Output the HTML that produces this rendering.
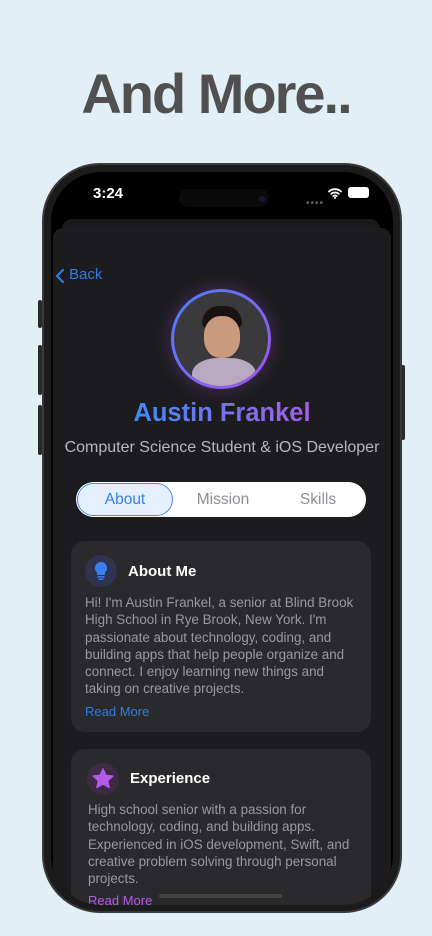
<!DOCTYPE html>
<html><head><meta charset="utf-8"><style>
*{margin:0;padding:0;box-sizing:border-box}
body{width:432px;height:936px;background:#e2eff6;position:relative;overflow:hidden;font-family:"Liberation Sans",sans-serif}
.title{position:absolute;top:61px;left:0;width:432px;text-align:center;font-size:56px;font-weight:bold;color:#505050;letter-spacing:-2px}
.btn{position:absolute;background:#2a2a2a;border-radius:2px}
.phone{position:absolute;left:42px;top:163px;width:360px;height:750px;border-radius:58px;background:#1b1b1b;border:2px solid #3a3a3a}
.screen{position:absolute;left:51px;top:172px;width:342px;height:733px;border-radius:50px;background:#000;overflow:hidden}
.sheet2{position:absolute;left:11px;top:47px;width:318px;height:40px;border-radius:10px;background:#1a1a1c}
.sheet{position:absolute;left:2px;top:56px;width:338px;height:700px;border-radius:10px;background:#1c1c1e}
.time{position:absolute;left:42px;top:13px;color:#fff;font-size:15px;font-weight:bold}
.island{position:absolute;left:128px;top:17px;width:90px;height:18px;border-radius:9px;background:#0a0a0a}
.s{position:absolute;color:#fff}
.card{position:absolute;left:18px;width:300px;border-radius:14px;background:#2a2a2d}
.ct{position:absolute;color:#fff;font-size:16px;font-weight:bold}
.cb{position:absolute;left:14px;color:#9a9a9e;font-size:13.4px;line-height:17.3px;width:276px}
.ic{position:absolute;left:14px;top:14px;width:32px;height:32px;border-radius:50%}
</style></head><body>
<div class="title">And More..</div>
<div class="btn" style="left:38px;top:300px;width:4px;height:28px"></div>
<div class="btn" style="left:38px;top:345px;width:4px;height:50px"></div>
<div class="btn" style="left:38px;top:405px;width:4px;height:50px"></div>
<div class="btn" style="left:401px;top:365px;width:4px;height:75px"></div>
<div class="phone"></div>
<div class="screen">
 <div class="time">3:24</div>
 <div class="island"></div>
 <div style="position:absolute;left:208px;top:24px;width:6px;height:6px;border-radius:50%;background:#15153a"></div>
 <div style="position:absolute;left:255px;top:26px;color:#666;font-size:10px;letter-spacing:1px">••••</div>
 <svg style="position:absolute;left:277px;top:15px" width="14" height="12" viewBox="0 0 14 12"><path d="M1 4.5a9 9 0 0 1 12 0M3.2 6.8a6 6 0 0 1 7.6 0M5.3 9a3 3 0 0 1 3.4 0" stroke="#fff" stroke-width="1.8" fill="none" stroke-linecap="round"/><circle cx="7" cy="10.8" r="1.1" fill="#fff"/></svg>
 <div style="position:absolute;left:297px;top:15px;width:21px;height:11px;border-radius:3px;background:#fff"></div>
 <div class="sheet2"></div>
 <div class="sheet">
  <svg style="position:absolute;left:2px;top:40px" width="10" height="16" viewBox="0 0 10 16"><path d="M8 2L2 8l6 6" stroke="#2f7de0" stroke-width="2.2" fill="none" stroke-linecap="round" stroke-linejoin="round"/></svg>
  <div class="s" style="left:16px;top:38px;color:#2f7de0;font-size:15px">Back</div>
  <div style="position:absolute;left:118px;top:61px;width:100px;height:100px;border-radius:50%;background:linear-gradient(135deg,#4a7dff,#a555e8);box-shadow:0 0 18px rgba(160,80,230,.35)"></div>
  <div style="position:absolute;left:121px;top:64px;width:94px;height:94px;border-radius:50%;background:#3a3a3c;overflow:hidden">
   <div style="position:absolute;left:28px;top:14px;width:40px;height:22px;border-radius:20px 20px 6px 6px;background:#1a1210"></div>
   <div style="position:absolute;left:30px;top:24px;width:36px;height:42px;border-radius:45%;background:#c99a7e"></div>
   <div style="position:absolute;left:18px;top:66px;width:64px;height:40px;border-radius:40% 40% 0 0;background:#b8a8c0"></div>
  </div>
  <div class="s" style="left:0;width:338px;top:171px;text-align:center;font-size:25.5px;font-weight:bold"><span style="background:linear-gradient(90deg,#3e8af5,#a45ee5);-webkit-background-clip:text;background-clip:text;color:transparent">Austin Frankel</span></div>
  <div class="s" style="left:0;width:338px;top:211px;text-align:center;font-size:16px;color:#b8b8bc">Computer Science Student &amp; iOS Developer</div>
  <div style="position:absolute;left:23px;top:254px;width:290px;height:35px;border-radius:18px;background:#fff"></div>
  <div style="position:absolute;left:24px;top:255px;width:96px;height:33px;border-radius:17px;background:#e4f0fd;border:1px solid #4a8ce8"></div>
  <div class="s" style="left:24px;width:96px;top:263px;text-align:center;color:#3582e6;font-size:15.5px">About</div>
  <div class="s" style="left:130px;width:80px;top:263px;text-align:center;color:#8e8e93;font-size:15.5px">Mission</div>
  <div class="s" style="left:225px;width:80px;top:263px;text-align:center;color:#8e8e93;font-size:15.5px">Skills</div>
  <div class="card" style="top:313px;height:191px">
   <div class="ic" style="background:#2f3350"></div>
   <svg style="position:absolute;left:23px;top:20px" width="14" height="20" viewBox="0 0 14 20"><path d="M7 1a6 6 0 0 0-4 10.5V14h8v-2.5A6 6 0 0 0 7 1z" fill="#3a7ff0"/><rect x="3.5" y="15" width="7" height="1.5" fill="#3a7ff0"/><rect x="4.5" y="17.5" width="5" height="1.5" fill="#3a7ff0"/></svg>
   <div class="ct" style="left:57px;top:22px;font-size:15px">About Me</div>
   <div class="cb" style="top:53px">Hi! I'm Austin Frankel, a senior at Blind Brook High School in Rye Brook, New York. I'm passionate about technology, coding, and building apps that help people organize and connect. I enjoy learning new things and taking on creative projects.</div>
   <div class="s" style="left:14px;top:163px;color:#2f7de0;font-size:13px">Read More</div>
  </div>
  <div class="card" style="top:521px;height:200px">
   <div class="ic" style="left:16px;background:#3e2a45"></div>
   <svg style="position:absolute;left:21px;top:19px" width="22" height="21" viewBox="0 0 24 23"><path d="M12 1l3.2 7 7.6.8-5.7 5.1 1.6 7.5L12 17.6 5.3 21.4l1.6-7.5L1.2 8.8l7.6-.8z" fill="#b35ae8" stroke="#b35ae8" stroke-linejoin="round" stroke-width="1.5"/></svg>
   <div class="ct" style="left:59px;top:21px;font-size:15px">Experience</div>
   <div class="cb" style="left:17px;top:52px">High school senior with a passion for technology, coding, and building apps. Experienced in iOS development, Swift, and creative problem solving through personal projects.</div>
   <div class="s" style="left:17px;top:144px;color:#b35ae8;font-size:13px">Read More</div>
  </div>
 </div>
 <div style="position:absolute;left:108px;top:722px;width:123px;height:4px;border-radius:2px;background:#444"></div>
</div>
</body></html>
